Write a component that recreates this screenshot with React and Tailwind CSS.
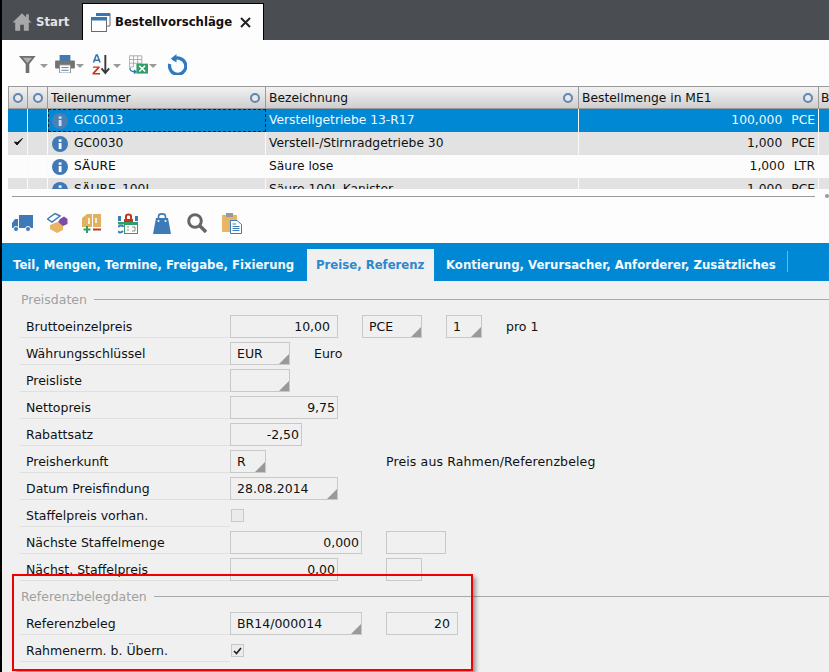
const F = ({ w, right, tight, combo, children, className = "" }) => (
  <div className={`relative h-[23px] shrink-0 border border-[#c8c8c8] bg-[#f0f0f0] flex items-center pt-[2px] text-[#111] ${tight ? "justify-end pr-[2px]" : right ? "justify-end pr-[7px]" : "pl-[6px]"} ${w} ${className}`}>
    {children}
    {combo && <span className="absolute right-0 bottom-0 w-0 h-0 border-l-[10px] border-l-transparent border-b-[10px] border-b-[#999]" />}
  </div>
);

const Row = ({ label, children }) => (
  <div className="flex items-start h-[27px]">
    <div className="h-[23px] w-[210px] shrink-0 pl-[6px] pt-[2px] flex items-center border-b border-[#e0e0e0] text-[#111]">{label}</div>
    <div className="flex items-center h-[23px]">{children}</div>
  </div>
);

const Section = ({ title, top = "" }) => (
  <div className={`flex items-center h-[16px] ${top}`}>
    <span className="text-[#a0a0a0] pl-[1px] pt-[2px]">{title}</span>
    <div className="flex-1 h-px bg-[#a8a8a8] ml-[7px]" />
  </div>
);

const Dot = () => (
  <span className="inline-block w-[10px] h-[10px] rounded-full border-2 border-[#5f86b3] bg-[#e8e8e8] shrink-0" />
);

const Info = ({ sel }) => (
  <svg width="16" height="16" viewBox="0 0 16 16" className="shrink-0">
    <circle cx="8" cy="8" r="8" fill={sel ? "#4a80b8" : "#4079b5"} />
    <rect x="6.7" y="7" width="2.8" height="6" fill={sel ? "#cfe0f0" : "#fff"} />
    <rect x="6.7" y="3.4" width="2.8" height="2.4" fill={sel ? "#cfe0f0" : "#fff"} />
  </svg>
);

const Caret = ({ className = "ml-[1px]" }) => (
  <span className={`w-0 h-0 border-l-[4px] border-r-[4px] border-t-[4px] border-l-transparent border-r-transparent border-t-[#999] mt-[3px] ${className}`} />
);

const rows = [
  { id: "GC0013", name: "Verstellgetriebe 13-R17", qty: "100,000", unit: "PCE", sel: true, bg: "bg-[#0088d4] text-[#f2f8fc]" },
  { id: "GC0030", name: "Verstell-/Stirnradgetriebe 30", qty: "1,000", unit: "PCE", mark: true, bg: "bg-[#e2e2e2] text-[#111]" },
  { id: "SÄURE", name: "Säure lose", qty: "1,000", unit: "LTR", bg: "bg-[#fcfcfc] text-[#111]" },
  { id: "SÄURE_100L", name: "Säure 100L Kanister", qty: "1,000", unit: "PCE", bg: "bg-[#e2e2e2] text-[#111]" },
];

const HeadCell = ({ w, children }) => (
  <div className={`${w} shrink-0 h-full border-r border-[#9a9a9a] flex items-center justify-between pl-[3px] pr-[5px]`}>
    <span className="pt-[2px]">{children}</span>
    <Dot />
  </div>
);

export default function App() {
  return (
    <div className="w-[829px] h-[672px] overflow-hidden relative bg-black pl-[2px] text-[12.5px] leading-none text-[#111]" style={{ fontFamily: '"DejaVu Sans", Verdana, sans-serif' }}>
      <div className="h-full bg-[#fdfdfd] flex flex-col">
        {/* top tabs */}
        <div className="h-[40px] shrink-0 bg-[#4a4d52] flex items-end text-[11.7px] font-bold">
          <div className="w-[80px] h-[37px] flex items-center pl-[10px] gap-[4px] text-[#e4e4e4]">
            <svg width="20" height="20" viewBox="0 0 22 20">
              <path d="M11 0.5 L0.5 10.5 H3.5 V19.5 H9 V13 H13 V19.5 H18.5 V10.5 H21.5 L18.5 7.5 V1.5 H15.5 V4.8 Z" fill="#a8a8a8" />
            </svg>
            <span className="pt-[2px]">Start</span>
          </div>
          <div className="w-[182px] h-[37px] bg-[#fdfdfd] border border-b-0 border-black flex items-center pl-[8px] text-[#111]">
            <svg width="20" height="20" viewBox="0 0 20 20" className="shrink-0">
              <path d="M5.5 1.5 H19 V14 H16" fill="none" stroke="#6a6a6a" />
              <rect x="5" y="1" width="14" height="3" fill="#3a76b5" />
              <rect x="0.5" y="5.5" width="15" height="14" fill="#fff" stroke="#6a6a6a" />
              <rect x="0" y="5" width="16" height="3.5" fill="#3a76b5" />
            </svg>
            <span className="ml-[4px] pt-[2px]">Bestellvorschläge</span>
            <svg width="11" height="11" viewBox="0 0 11 11" className="ml-[8px]">
              <path d="M1 1 L10 10 M10 1 L1 10" stroke="#222" strokeWidth="2" />
            </svg>
          </div>
        </div>

        {/* toolbar */}
        <div className="h-[46px] shrink-0 flex items-center pl-[16px] pt-[2px]">
          <svg width="19" height="19" viewBox="0 0 20 21"><path d="M0.5 1 H19 L12 10 V20 H8 V10 Z" fill="#6f6f6f" /><path d="M5 3 H15 L10.5 8.5 H9.5 Z" fill="#b0b0b0" /></svg>
          <Caret className="ml-[3px]" />
          <svg width="20" height="18" viewBox="0 0 22 20" className="ml-[7px]">
            <rect x="5" y="0" width="12" height="7" fill="#3f7ab8" />
            <rect x="0" y="6" width="22" height="9" rx="1" fill="#737373" />
            <rect x="5" y="11" width="12" height="9" fill="#fff" stroke="#8a8a8a" />
            <path d="M7 14 H15 M7 17 H15" stroke="#3f7ab8" />
          </svg>
          <Caret />
          <svg width="20" height="21" viewBox="0 0 21 22" className="ml-[8px]">
            <path d="M1.5 9 L4.5 1 H5.5 L8.5 9 M3 6.5 H7" fill="none" stroke="#2e73b8" strokeWidth="1.6" />
            <path d="M1 13 H8 V14.5 L3 20 H8.5 V21.5 H0.5 V20 L5.5 14.5 H1 Z" fill="#c4361d" />
            <path d="M14 1 V19 M10 15 L14 20 L18 15" fill="none" stroke="#3a3a3a" strokeWidth="2" />
          </svg>
          <Caret />
          <svg width="19" height="19" viewBox="0 0 23 22" className="ml-[8px]">
            <path d="M0.5 0.5 H15.5 V10 M0.5 0.5 V14 H5 M5.5 0.5 V14 M10.5 0.5 V10 M0.5 5 H15.5 M0.5 9.5 H15.5" fill="none" stroke="#a0a0a0" />
            <rect x="9" y="10" width="14" height="12" fill="#2f9e6a" />
            <path d="M12.5 12.5 L19.5 19.5 M19.5 12.5 L12.5 19.5" stroke="#fff" strokeWidth="2" />
            <path d="M1 15 C1 19 4 20 8 20 M6 17.5 L8.5 20 L6 22" fill="none" stroke="#2e73b8" strokeWidth="1.5" />
          </svg>
          <Caret />
          <svg width="21" height="21" viewBox="0 0 22 22" className="ml-[9px]">
            <path d="M6 4.5 A8.5 8.5 0 1 1 3 9" fill="none" stroke="#2f7abf" strokeWidth="3.4" transform="translate(1 1.5)" />
            <path d="M11 0 V9 L5 5 Z" fill="#2f7abf" />
          </svg>
        </div>

        {/* table */}
        <div className="h-[103px] shrink-0 overflow-hidden pl-[6px] text-[12.3px]">
          <div className="h-[23px] flex items-center border border-[#9a9a9a] border-r-0 bg-gradient-to-b from-[#f2f2f2] to-[#cfcfcf] text-[#111]">
            <div className="w-[19px] h-full shrink-0 border-r border-[#9a9a9a] flex items-center justify-center"><Dot /></div>
            <div className="w-[20px] h-full shrink-0 border-r border-[#9a9a9a] flex items-center justify-center"><Dot /></div>
            <HeadCell w="w-[218px]">Teilenummer</HeadCell>
            <HeadCell w="w-[313px]">Bezeichnung</HeadCell>
            <HeadCell w="w-[240px]">Bestellmenge in ME1</HeadCell>
            <div className="pl-[2px] pt-[2px]">B</div>
          </div>
          {rows.map((r) => (
            <div key={r.id} className={`h-[23px] flex items-center ${r.bg}`}>
              <div className="w-[20px] h-full shrink-0 border-r border-[#fafafa] flex items-center justify-center pl-[2px]">
                {r.mark && (
                  <svg width="9" height="8" viewBox="0 0 9 8" className="mb-[3px]">
                    <path d="M0.5 4 L3 7 L8.5 0.5 L3.5 4.5 Z" fill="#111" stroke="#111" />
                  </svg>
                )}
              </div>
              <div className="w-[20px] h-full shrink-0 border-r border-[#fafafa]" />
              <div className={`w-[218px] shrink-0 h-full flex items-center pl-[4px] gap-[6px] ${r.sel ? "outline-1 outline-dashed -outline-offset-1 outline-[#222]" : "border-r border-[#fafafa]"}`}>
                <Info sel={r.sel} />
                <span>{r.id}</span>
              </div>
              <div className="w-[313px] shrink-0 h-full flex items-center pl-[3px] border-r border-[#fafafa]">{r.name}</div>
              <div className="w-[240px] shrink-0 h-full flex items-center justify-end pr-[3px] border-r border-[#fafafa]">
                <span>{r.qty}</span>
                <span className="ml-[9px]">{r.unit}</span>
              </div>
            </div>
          ))}
        </div>

        {/* divider */}
        <div className="h-[14px] shrink-0 flex items-center pl-[10px]">
          <div className="h-px flex-1 bg-[#9a9a9a]" />
          <div className="w-[4px] h-[4px] rounded-full bg-[#9a9a9a] ml-[10px]" />
        </div>

        {/* action toolbar */}
        <div className="h-[40px] shrink-0 flex items-center pl-[10px]">
          <svg width="21" height="17" viewBox="0 0 21 17">
            <rect x="7" y="0" width="14" height="13" fill="#3f7ab8" />
            <path d="M0 8 L3 4 H6 V13 H0 Z" fill="#3f7ab8" />
            <circle cx="4" cy="14" r="2.5" fill="#3f7ab8" stroke="#fff" />
            <circle cx="16" cy="14" r="2.5" fill="#3f7ab8" stroke="#fff" />
          </svg>
          <svg width="21" height="20" viewBox="0 0 21 20" className="ml-[14px]">
            <path d="M3 12 L10 9 L16 12 V17 L10 20 L3 16 Z" fill="#e8b565" />
            <path d="M0.5 6 L8 0.5 L13 3 L5 9 Z" fill="#fff" stroke="#3f7ab8" strokeWidth="1.5" />
            <path d="M13 6 L17 3.5 L20.5 6 V11 L16 13 L11 9 Z" fill="#7d4aa8" />
          </svg>
          <svg width="20" height="20" viewBox="0 0 20 20" className="ml-[14px]">
            <path d="M0 5 L5 1 H10 V14 H0 Z M11 1 H19 V14 H11 Z" fill="#e0b25f" />
            <path d="M7 5 V11 M14 5 V10" stroke="#fff" strokeWidth="1.5" />
            <path d="M5 13 V20 M1.5 16.5 H8.5" stroke="#2f9e6a" strokeWidth="2" />
            <path d="M11 16.5 H19" stroke="#c4361d" strokeWidth="2" />
          </svg>
          <svg width="20" height="21" viewBox="0 0 20 21" className="ml-[16px]">
            <path d="M8 6 V3 C8 1 13 1 13 3 V6" fill="none" stroke="#c4361d" strokeWidth="2" />
            <rect x="6" y="6" width="9" height="3" fill="#c4361d" />
            <rect x="0" y="3" width="3" height="5" fill="#3f7ab8" />
            <rect x="17" y="3" width="3" height="5" fill="#3f7ab8" />
            <rect x="6.5" y="11.5" width="13" height="9" fill="#fff" stroke="#2f9e6a" />
            <rect x="0" y="9" width="20" height="2.5" fill="#2f9e6a" />
            <path d="M0 14 C2 12 5 12 5 14 M5 18 C3 20 1 20 0 18" fill="none" stroke="#3f7ab8" strokeWidth="2" />
            <path d="M9 14 H11 M9 17 H11 M14 14 H17 V18 H14" fill="none" stroke="#888" />
          </svg>
          <svg width="18" height="21" viewBox="0 0 18 21" className="ml-[15px]">
            <path d="M3 5 H15 L18 21 H0 Z" fill="#3f7ab8" />
            <path d="M5.5 8 V3.5 C5.5 0 12.5 0 12.5 3.5 V8" fill="none" stroke="#3f7ab8" strokeWidth="1.6" />
            <circle cx="5.5" cy="8" r="1" fill="#fff" />
            <circle cx="12.5" cy="8" r="1" fill="#fff" />
          </svg>
          <svg width="20" height="20" viewBox="0 0 20 20" className="ml-[16px]">
            <circle cx="8" cy="8" r="6.3" fill="none" stroke="#666" strokeWidth="3" />
            <path d="M12.5 12.5 L19 19" stroke="#666" strokeWidth="3.4" />
          </svg>
          <svg width="20" height="21" viewBox="0 0 20 21" className="ml-[15px]">
            <rect x="0" y="2" width="15" height="17" fill="#e8b565" />
            <rect x="4" y="0" width="7" height="4" fill="#999" />
            <path d="M8.5 7.5 H15 L19.5 11.5 V20.5 H8.5 Z" fill="#fff" stroke="#3f7ab8" />
            <path d="M10.5 11 H14 M10.5 13.5 H17.5 M10.5 15.5 H17.5 M10.5 17.5 H17.5" stroke="#3f7ab8" />
          </svg>
        </div>

        {/* tabs */}
        <div className="h-[38px] shrink-0 bg-[#0088d4] flex items-end pl-[3px] font-bold text-[11.7px] text-[#f4f9fc] whitespace-nowrap">
          <div className="h-[32px] w-[302px] pl-[8px] pt-[2px] flex items-center">Teil, Mengen, Termine, Freigabe, Fixierung</div>
          <div className="h-[32px] w-[127px] bg-[#f0f0f0] text-[#2d88cd] flex items-center pl-[9px] pt-[2px]">Preise, Referenz</div>
          <div className="h-[32px] flex items-center pl-[12px] pt-[2px]">Kontierung, Verursacher, Anforderer, Zusätzliches</div>
          <div className="w-px h-[21px] bg-[#6db8e4] ml-[11px] mb-[9px]" />
        </div>

        {/* form */}
        <div className="flex-1 bg-[#f0f0f0] pl-[18px] pt-[10px] overflow-hidden">
          <Section title="Preisdaten" />
          <div className="pt-[8px]">
            <Row label="Bruttoeinzelpreis">
              <F w="w-[108px]" right>10,00</F>
              <F w="w-[60px]" combo className="ml-[24px]">PCE</F>
              <F w="w-[36px]" combo className="ml-[24px]">1</F>
              <span className="ml-[24px] pt-[2px]">pro 1</span>
            </Row>
            <Row label="Währungsschlüssel">
              <F w="w-[60px]" combo>EUR</F>
              <span className="ml-[24px] pt-[2px]">Euro</span>
            </Row>
            <Row label="Preisliste"><F w="w-[60px]" combo /></Row>
            <Row label="Nettopreis"><F w="w-[108px]" tight>9,75</F></Row>
            <Row label="Rabattsatz"><F w="w-[72px]" tight>-2,50</F></Row>
            <Row label="Preisherkunft">
              <F w="w-[36px]" combo>R</F>
              <span className="ml-[120px] pt-[2px] tracking-[0.13px]">Preis aus Rahmen/Referenzbeleg</span>
            </Row>
            <Row label="Datum Preisfindung"><F w="w-[108px]" combo>28.08.2014</F></Row>
            <Row label="Staffelpreis vorhan.">
              <span className="w-[13px] h-[13px] ml-[1px] border border-[#c8c8c8] bg-[#ebebeb]" />
            </Row>
            <Row label="Nächste Staffelmenge">
              <F w="w-[132px]" tight>0,000</F>
              <F w="w-[60px]" className="ml-[24px]" />
            </Row>
            <Row label="Nächst. Staffelpreis">
              <F w="w-[108px]" tight>0,00</F>
              <F w="w-[36px]" className="ml-[48px]" />
            </Row>
          </div>
          <Section title="Referenzbelegdaten" top="mt-[3px]" />
          <div className="pt-[8px]">
            <Row label="Referenzbeleg">
              <F w="w-[132px]" combo>BR14/000014</F>
              <F w="w-[72px]" right className="ml-[24px]">20</F>
            </Row>
            <Row label="Rahmenerm. b. Übern.">
              <span className="w-[13px] h-[13px] ml-[1px] border border-[#c8c8c8] bg-[#ebebeb] flex items-center justify-center">
                <svg width="9" height="8" viewBox="0 0 9 8"><path d="M1 4 L3.5 6.5 L8 1" fill="none" stroke="#222" strokeWidth="1.7" /></svg>
              </span>
            </Row>
          </div>
        </div>
      </div>
      {/* red highlight */}
      <div className="absolute left-[12px] top-[574px] w-[461px] h-[97px] border-2 border-[#f00000] shadow-[3px_3px_4px_rgba(0,0,0,0.35)]" />
    </div>
  );
}
